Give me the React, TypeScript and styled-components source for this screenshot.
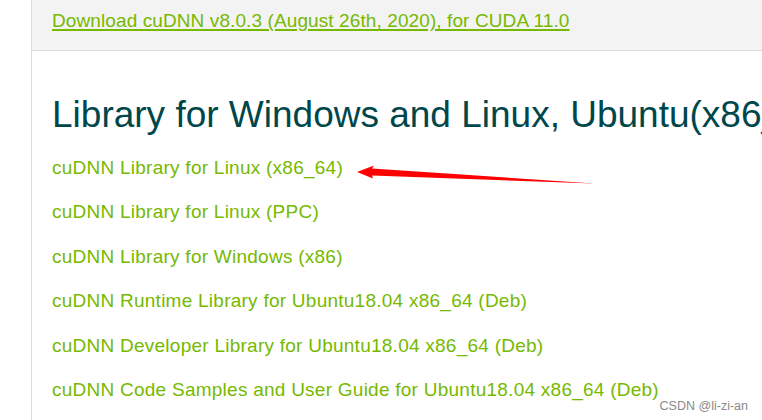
import styled, { createGlobalStyle } from "styled-components";

const GlobalStyle = createGlobalStyle`
    html, body {
        margin: 0;
        padding: 0;
        background: #ffffff;
        overflow: hidden;
    }
    body {
        font-family: "Liberation Sans", Arial, sans-serif;
    }
`;

const Page = styled.div`
    position: relative;
    width: 762px;
    height: 420px;
    overflow: hidden;
`;

const Content = styled.main`
    margin-left: 31px;
    height: 100%;
    border-left: 1px solid #dcdcdc;
`;

const Banner = styled.div`
    display: flex;
    align-items: center;
    height: 50px;
    padding: 0 20px;
    background-color: #f3f3f3;
    border-bottom: 1px solid #dcdcdc;
`;

const BannerLink = styled.a`
    font-size: 19px;
    letter-spacing: 0.1px;
    line-height: 24px;
    margin-top: -8px;
    color: #76b900;
    text-decoration: underline;
    text-decoration-thickness: 2px;
    text-underline-offset: 2px;
    white-space: nowrap;
`;

const Section = styled.section`
    display: flex;
    flex-direction: column;
    padding: 42px 20px 0;
`;

const H2 = styled.h2`
    margin: 0 0 9px;
    font-size: 37px;
    font-weight: 400;
    line-height: 44px;
    color: #00474c;
    white-space: nowrap;
`;

const LinkList = styled.ul`
    list-style: none;
    margin: 0;
    padding: 0;
`;

const Item = styled.li`
    height: 44.4px;
    line-height: 44.4px;
`;

const Link = styled.a`
    font-size: 19px;
    letter-spacing: 0.25px;
    color: #76b900;
    text-decoration: none;
    white-space: nowrap;
`;

const Arrow = styled.svg`
    position: absolute;
    left: 0;
    top: 0;
    pointer-events: none;
`;

const Watermark = styled.span`
    position: absolute;
    right: 14px;
    bottom: 7px;
    font-family: "Liberation Sans", Arial, sans-serif;
    font-size: 12.5px;
    color: #8a8a8a;
`;

const links = [
    "cuDNN Library for Linux (x86_64)",
    "cuDNN Library for Linux (PPC)",
    "cuDNN Library for Windows (x86)",
    "cuDNN Runtime Library for Ubuntu18.04 x86_64 (Deb)",
    "cuDNN Developer Library for Ubuntu18.04 x86_64 (Deb)",
    "cuDNN Code Samples and User Guide for Ubuntu18.04 x86_64 (Deb)",
];

export default function App() {
    return (
        <>
            <GlobalStyle />
            <Page>
                <Content>
                    <Banner>
                        <BannerLink href="#">
                            Download cuDNN v8.0.3 (August 26th, 2020), for CUDA 11.0
                        </BannerLink>
                    </Banner>
                    <Section>
                        <H2>Library for Windows and Linux, Ubuntu(x86_64)</H2>
                        <LinkList>
                            {links.map((text) => (
                                <Item key={text}>
                                    <Link href="#">{text}</Link>
                                </Item>
                            ))}
                        </LinkList>
                    </Section>
                </Content>
                <Arrow width="762" height="420" viewBox="0 0 762 420">
                    <polygon
                        points="357,172 374,165.5 372,168.5 594,183.5 372,175.5 373,178.5"
                        fill="#ff0000"
                    />
                </Arrow>
                <Watermark>CSDN @li-zi-an</Watermark>
            </Page>
        </>
    );
}
